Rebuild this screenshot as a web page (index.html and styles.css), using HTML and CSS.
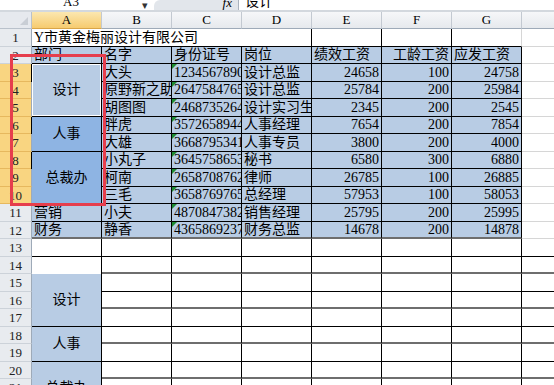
FILE: index.html
```html
<!DOCTYPE html>
<html lang="zh-CN">
<head>
    <meta charset="UTF-8">
    <title>工资表</title>
    <link rel="stylesheet" href="styles.css">
</head>
<body>
    <div class="formula-bar">
        <div class="name-box"><span>A3</span></div>
        <div class="drop">▾</div>
        <div class="fx-area"><span class="fx">fx</span></div>
        <div class="formula-input"><span>设计</span></div>
    </div>

    <div class="sheet">
        <!-- 列标题 -->
        <div class="corner"></div>
        <div class="ch sel">A</div><div class="ch">B</div><div class="ch">C</div><div class="ch">D</div>
        <div class="ch">E</div><div class="ch">F</div><div class="ch">G</div><div class="ch"></div>

        <!-- 1 -->
        <div class="rh">1</div>
        <div class="c title">Y市黄金梅丽设计有限公司</div>
        <div class="c k"></div><div class="c k"></div><div class="c kb"></div><div class="c"></div>

        <!-- 2 -->
        <div class="rh">2</div>
        <div class="c d">部门</div><div class="c d">名字</div><div class="c d">身份证号</div><div class="c d">岗位</div>
        <div class="c d">绩效工资</div><div class="c d n">工龄工资</div><div class="c d">应发工资</div><div class="c"></div>

        <!-- 3 -->
        <div class="rh sel">3</div>
        <div class="c d m3 pick active">设计</div>
        <div class="c d">大头</div><div class="c d t">1234567890</div><div class="c d">设计总监</div>
        <div class="c d n">24658</div><div class="c d n">100</div><div class="c d n">24758</div><div class="c"></div>

        <!-- 4 -->
        <div class="rh sel">4</div>
        <div class="c d">原野新之助</div><div class="c d t">2647584765</div><div class="c d">设计总监</div>
        <div class="c d n">25784</div><div class="c d n">200</div><div class="c d n">25984</div><div class="c"></div>

        <!-- 5 -->
        <div class="rh sel">5</div>
        <div class="c d">胡图图</div><div class="c d t">2468735264</div><div class="c d">设计实习生</div>
        <div class="c d n">2345</div><div class="c d n">200</div><div class="c d n">2545</div><div class="c"></div>

        <!-- 6 -->
        <div class="rh sel">6</div>
        <div class="c d m2 pick dark">人事</div>
        <div class="c d">胖虎</div><div class="c d t">3572658944</div><div class="c d">人事经理</div>
        <div class="c d n">7654</div><div class="c d n">200</div><div class="c d n">7854</div><div class="c"></div>

        <!-- 7 -->
        <div class="rh sel">7</div>
        <div class="c d">大雄</div><div class="c d t">3668795341</div><div class="c d">人事专员</div>
        <div class="c d n">3800</div><div class="c d n">200</div><div class="c d n">4000</div><div class="c"></div>

        <!-- 8 -->
        <div class="rh sel">8</div>
        <div class="c d m3 pick dark">总裁办</div>
        <div class="c d">小丸子</div><div class="c d t">3645758653</div><div class="c d">秘书</div>
        <div class="c d n">6580</div><div class="c d n">300</div><div class="c d n">6880</div><div class="c"></div>

        <!-- 9 -->
        <div class="rh sel">9</div>
        <div class="c d">柯南</div><div class="c d t">2658708762</div><div class="c d">律师</div>
        <div class="c d n">26785</div><div class="c d n">100</div><div class="c d n">26885</div><div class="c"></div>

        <!-- 10 -->
        <div class="rh sel">10</div>
        <div class="c d">三毛</div><div class="c d t">3658769765</div><div class="c d">总经理</div>
        <div class="c d n">57953</div><div class="c d n">100</div><div class="c d n">58053</div><div class="c"></div>

        <!-- 11 -->
        <div class="rh">11</div>
        <div class="c d">营销</div><div class="c d">小夫</div><div class="c d t">4870847382</div><div class="c d">销售经理</div>
        <div class="c d n">25795</div><div class="c d n">200</div><div class="c d n">25995</div><div class="c"></div>

        <!-- 12 -->
        <div class="rh">12</div>
        <div class="c d g">财务</div><div class="c d g">静香</div><div class="c d g t">4365869237</div><div class="c d g">财务总监</div>
        <div class="c d g n">14678</div><div class="c d g n">200</div><div class="c d g n">14878</div><div class="c"></div>

        <!-- 13 -->
        <div class="rh">13</div>
        <div class="c k"></div><div class="c k"></div><div class="c k"></div><div class="c k"></div>
        <div class="c k"></div><div class="c k"></div><div class="c k"></div><div class="c k"></div>

        <!-- 14 -->
        <div class="rh">14</div>
        <div class="c kr"></div><div class="c k g"></div><div class="c k g"></div><div class="c k g"></div>
        <div class="c k g"></div><div class="c k g"></div><div class="c k g"></div><div class="c k g"></div>

        <!-- 15 -->
        <div class="rh">15</div>
        <div class="c d m3 mid">设计</div>
        <div class="c k"></div><div class="c k"></div><div class="c k"></div>
        <div class="c k"></div><div class="c k"></div><div class="c k"></div><div class="c k"></div>

        <!-- 16 -->
        <div class="rh">16</div>
        <div class="c k g"></div><div class="c k g"></div><div class="c k g"></div>
        <div class="c k g"></div><div class="c k g"></div><div class="c k g"></div><div class="c k g"></div>

        <!-- 17 -->
        <div class="rh">17</div>
        <div class="c k"></div><div class="c k"></div><div class="c k"></div>
        <div class="c k"></div><div class="c k"></div><div class="c k"></div><div class="c k"></div>

        <!-- 18 -->
        <div class="rh">18</div>
        <div class="c d m2 mid">人事</div>
        <div class="c k g"></div><div class="c k g"></div><div class="c k g"></div>
        <div class="c k g"></div><div class="c k g"></div><div class="c k g"></div><div class="c k g"></div>

        <!-- 19 -->
        <div class="rh">19</div>
        <div class="c k"></div><div class="c k"></div><div class="c k"></div>
        <div class="c k"></div><div class="c k"></div><div class="c k"></div><div class="c k"></div>

        <!-- 20 -->
        <div class="rh">20</div>
        <div class="c d m3 mid">总裁办</div>
        <div class="c k g"></div><div class="c k g"></div><div class="c k g"></div>
        <div class="c k g"></div><div class="c k g"></div><div class="c k g"></div><div class="c k g"></div>

        <!-- 21 -->
        <div class="rh">21</div>
        <div class="c k"></div><div class="c k"></div><div class="c k"></div>
        <div class="c k"></div><div class="c k"></div><div class="c k"></div><div class="c k"></div>

        <!-- 22 -->
        <div class="rh">22</div>
        <div class="c k g"></div><div class="c k g"></div><div class="c k g"></div>
        <div class="c k g"></div><div class="c k g"></div><div class="c k g"></div><div class="c k g"></div>
    </div>

    <!-- 红框标注 -->
    <div class="mark"></div>
</body>
</html>
```

FILE: styles.css
```css
body {
    margin: 0;
    width: 554px;
    height: 385px;
    overflow: hidden;
    position: relative;
    background: #fff;
    color: #000;
    font-family: "Liberation Serif", "Noto Sans CJK SC", serif;
    font-size: 14px;
}

/* 编辑栏（只露出下半截） */
.formula-bar {
    display: flex;
    height: 10px;
    overflow: hidden;
    border-bottom: 2px solid #d3d8de;
    background: #fff;
}
.name-box, .formula-input {
    display: flex;
    align-items: flex-end;
    line-height: 17px;
}
.name-box {
    width: 142px;
    justify-content: center;
    font-size: 13px;
}
.drop {
    width: 12px;
    font-size: 11px;
    line-height: 10px;
    color: #333;
}
.fx-area {
    width: 78px;
    background: #e2e6eb;
    border-radius: 6px 0 0 0;
    display: flex;
    justify-content: flex-end;
    align-items: flex-end;
    padding-right: 6px;
    border-right: 1px solid #a9b2bd;
}
.fx {
    font-style: italic;
    font-size: 13px;
    line-height: 15px;
}
.formula-input {
    flex: 1;
    padding-left: 6px;
}

/* 工作表 */
.sheet {
    display: grid;
    grid-template-columns: 32px repeat(7, 70px) 33px;
    grid-template-rows: 17px repeat(11, 18px 17px);
}
.corner {
    background: #e6e9ee;
    border-right: 1px solid #b9c1cb;
    border-bottom: 1px solid #b9c1cb;
    position: relative;
}
.corner::after {
    content: "";
    position: absolute;
    right: 3px;
    bottom: 3px;
    border-left: 8px solid transparent;
    border-bottom: 8px solid #c9ced5;
}
.ch {
    background: linear-gradient(#f6f7f9, #e6e9ed);
    border-right: 1px solid #c3c9d1;
    border-bottom: 1px solid #9eaab8;
    text-align: center;
    font-size: 13px;
    line-height: 16px;
}
.ch.sel {
    background: linear-gradient(#fbe7b0, #f6cb6f);
    border-bottom-color: #d9a548;
}
.rh {
    background: #e8ebef;
    border-right: 1px solid #9eaab8;
    border-bottom: 1px solid #ccd2d9;
    text-align: center;
    font-size: 13px;
    line-height: 17px;
    color: #222;
}
.rh.sel {
    background: #f9d581;
    border-bottom-color: #e6b85e;
}

.c {
    box-sizing: border-box;
    border-right: 1px solid #d6d6d6;
    border-bottom: 1px solid #d6d6d6;
    padding: 0 2px;
    white-space: nowrap;
    overflow: hidden;
    display: flex;
    align-items: center;
    line-height: 16px;
}
.title {
    grid-column: span 4;
    overflow: visible;
    border-right-color: #000;
    border-bottom-color: #000;
}
.k {
    border-right-color: #000;
    border-bottom-color: #000;
}
.kb { border-bottom-color: #000; }
.kr {
    border-right-color: #000;
    border-bottom: 0;
}
.d {
    background: #b8cce4;
    border-right-color: #000;
    border-bottom-color: #000;
}
.n { justify-content: flex-end; }
.g { border-bottom: 2px solid #6e6e6e; }

/* 合并单元格 */
.m2 { grid-row: span 2; }
.m3 { grid-row: span 3; }
.pick, .mid { justify-content: center; }
.pick { border-left: 1px solid #000; margin-left: -1px; }
.active { box-shadow: inset 0 0 0 1px #fff; }
.dark { background: #8eb4e3; }

/* 文本型数字的绿色小三角 */
.t { position: relative; }
.t::before {
    content: "";
    position: absolute;
    left: 0;
    top: 0;
    border-top: 5px solid #1e8c32;
    border-right: 5px solid transparent;
}

.mark {
    position: absolute;
    left: 10px;
    top: 54px;
    width: 96px;
    height: 152px;
    box-sizing: border-box;
    border: 3px solid #e63e4d;
}
```
